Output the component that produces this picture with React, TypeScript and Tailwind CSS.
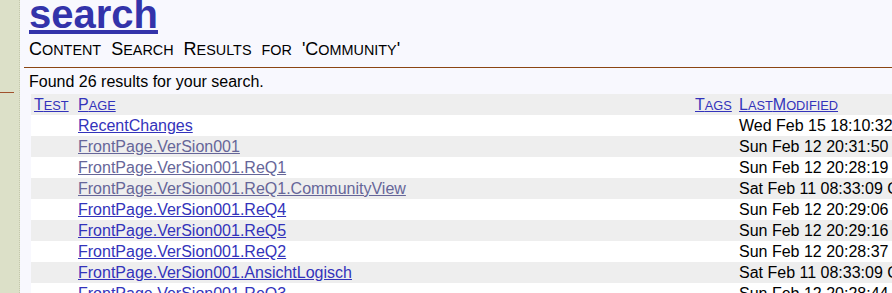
import React from 'react';

type Row = { page: string; visited?: boolean; modified: string };

const ROWS: Row[] = [
    { page: 'RecentChanges', modified: 'Wed Feb 15 18:10:32 CET 2006' },
    { page: 'FrontPage.VerSion001', visited: true, modified: 'Sun Feb 12 20:31:50 CET 2006' },
    { page: 'FrontPage.VerSion001.ReQ1', visited: true, modified: 'Sun Feb 12 20:28:19 CET 2006' },
    { page: 'FrontPage.VerSion001.ReQ1.CommunityView', visited: true, modified: 'Sat Feb 11 08:33:09 CET 2006' },
    { page: 'FrontPage.VerSion001.ReQ4', modified: 'Sun Feb 12 20:29:06 CET 2006' },
    { page: 'FrontPage.VerSion001.ReQ5', modified: 'Sun Feb 12 20:29:16 CET 2006' },
    { page: 'FrontPage.VerSion001.ReQ2', modified: 'Sun Feb 12 20:28:37 CET 2006' },
    { page: 'FrontPage.VerSion001.AnsichtLogisch', modified: 'Sat Feb 11 08:33:09 CET 2006' },
    { page: 'FrontPage.VerSion001.ReQ3', modified: 'Sun Feb 12 20:28:44 CET 2006' },
];

// small caps with the lowercase letters drawn at 0.8 of the size
const SmallCaps = ({ text }: { text: string }) => {
    const parts = text.match(/[^a-z]+|[a-z]+/g) ?? [];
    return (
        <>
            {parts.map((part, i) =>
                /[a-z]/.test(part) ? (
                    <span key={i} className="text-[0.8em] leading-none uppercase">
                        {part}
                    </span>
                ) : (
                    <span key={i}>{part}</span>
                )
            )}
        </>
    );
};

const HeaderLink = ({ label }: { label: string }) => (
    <a href="#" className="text-[#3333bb] underline">
        <SmallCaps text={label} />
    </a>
);

const ResultsTable = () => {
    return (
        <table className="ml-[2px] mt-[2px] w-[945px] max-w-none table-fixed border-collapse text-[16px] leading-[21px]">
            <colgroup>
                <col className="w-[44px]" />
                <col className="w-[617px]" />
                <col className="w-[44px]" />
                <col className="w-[240px]" />
            </colgroup>
            <thead>
                <tr className="h-[21px] bg-[#eeeeee]">
                    <th className="px-[3px] py-0 text-left font-normal">
                        <HeaderLink label="Test" />
                    </th>
                    <th className="px-[3px] py-0 text-left font-normal">
                        <HeaderLink label="Page" />
                    </th>
                    <th className="px-[3px] py-0 text-left font-normal">
                        <HeaderLink label="Tags" />
                    </th>
                    <th className="px-[3px] py-0 text-left font-normal">
                        <HeaderLink label="LastModified" />
                    </th>
                </tr>
            </thead>
            <tbody>
                {ROWS.map((row, i) => (
                    <tr key={row.page} className={i % 2 === 0 ? 'h-[21px] bg-white' : 'h-[21px] bg-[#eeeeee]'}>
                        <td className="px-[3px] py-0"></td>
                        <td className="px-[3px] py-0">
                            <a
                                href="#"
                                className={row.visited ? 'text-[#666699] underline' : 'text-[#3333bb] underline'}
                            >
                                {row.page}
                            </a>
                        </td>
                        <td className="px-[3px] py-0"></td>
                        <td className="whitespace-nowrap px-[3px] py-0 text-black">{row.modified}</td>
                    </tr>
                ))}
            </tbody>
        </table>
    );
};

export default function App() {
    return (
        <div className="flex h-[293px] w-[892px] overflow-hidden bg-[#f8f8fe] font-['Liberation_Sans',Arial,sans-serif] text-black">
            <aside className="w-[20px] shrink-0 border-r border-dotted border-[#c4c8ac] bg-[#dce0c8]">
                <div className="mt-[92px] h-px w-[14px] bg-[#a0522d]" />
            </aside>
            <main className="min-w-0 flex-1 pl-[4px]">
                <div className="pl-[5px]">
                    <h1 className="text-[40px] font-bold leading-[28px]">
                        <a href="#" className="text-[#3333aa] underline">
                            search
                        </a>
                    </h1>
                    <h2 className="mt-[10px] h-[22px] text-[18px] leading-[22px] [word-spacing:5px]">
                        <SmallCaps text="Content Search Results for 'Community'" />
                    </h2>
                </div>
                <hr className="mt-[7px] border-0 border-t border-[#8b4513]" />
                <div className="pl-[5px]">
                    <p className="mt-[3px] text-[16px] leading-[21px]">Found 26 results for your search.</p>
                    <ResultsTable />
                </div>
            </main>
        </div>
    );
}
